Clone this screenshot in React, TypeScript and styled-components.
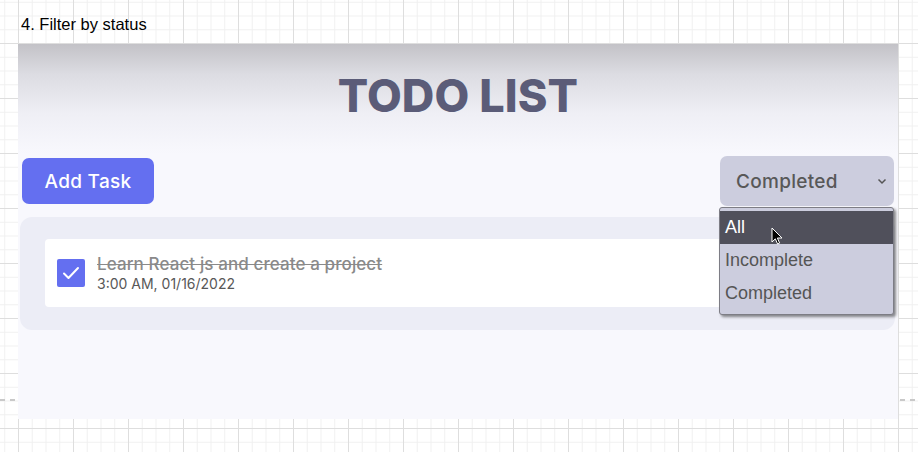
import React from "react";
import styled, { createGlobalStyle } from "styled-components";

const Global = createGlobalStyle`
  html, body { margin: 0; padding: 0; }
  body {
    width: 918px;
    height: 452px;
    overflow: hidden;
    font-family: "Liberation Sans", Arial, sans-serif;
    background-color: #ffffff;
    background-image:
      repeating-linear-gradient(90deg, #c9c9c9 0 5px, transparent 5px 10px),
      linear-gradient(90deg, #dedede 1px, transparent 1px),
      linear-gradient(0deg, #dedede 1px, transparent 1px),
      linear-gradient(90deg, #f0f0f0 1px, transparent 1px),
      linear-gradient(0deg, #f0f0f0 1px, transparent 1px);
    background-size: 100% 2px, 55px 55px, 55px 55px, 13.75px 13.75px, 13.75px 13.75px;
    background-position: 0 399px, 18px 44px, 18px 44px, 18px 44px, 18px 44px;
    background-repeat: no-repeat, repeat, repeat, repeat, repeat;
  }
`;

const Caption = styled.div`
  height: 44px;
  box-sizing: border-box;
  padding: 15px 0 0 21px;
  font-size: 16.5px;
  line-height: 18px;
  color: #000;
`;

const Panel = styled.div`
  margin-left: 18px;
  width: 880px;
  height: 375px;
  box-sizing: border-box;
  padding: 0 4px;
  background: linear-gradient(180deg, #c3c2c7 0px, #dcdce2 30px, #efeff5 70px, #f8f8fd 110px, #f8f8fd 100%);
  font-family: Inter, "Noto Sans", sans-serif;
  display: flex;
  flex-direction: column;
`;

const Title = styled.h1`
  margin: 24px 0 0;
  text-align: center;
  font-size: 45px;
  line-height: 56px;
  font-weight: 800;
  color: #5b5c78;
  letter-spacing: 0.1px;
`;

const Toolbar = styled.div`
  margin-top: 32px;
  display: flex;
  align-items: center;
  justify-content: space-between;
`;

const AddButton = styled.button`
  width: 132px;
  height: 46px;
  border: none;
  border-radius: 7px;
  background: #646ff0;
  color: #fff;
  font-family: inherit;
  font-size: 19px;
  font-weight: 500;
  letter-spacing: 0.3px;
  padding: 0;
`;

const SelectWrap = styled.div`
  position: relative;
`;

const SelectBox = styled.div`
  width: 174px;
  height: 50px;
  box-sizing: border-box;
  border-radius: 7px;
  background: #cccdde;
  display: flex;
  align-items: center;
  justify-content: space-between;
  padding: 0 7px 0 16px;
  color: #585858;
  font-size: 19px;
  font-weight: 500;
  letter-spacing: 0.3px;
`;

const Menu = styled.div`
  position: absolute;
  top: 51px;
  left: -1px;
  width: 175px;
  height: 108px;
  box-sizing: border-box;
  padding-top: 3px;
  background: #cccdde;
  border: 1px solid #7d7d85;
  border-radius: 3px;
  box-shadow: 2px 2px 3px rgba(0, 0, 0, 0.45);
  font-family: "Liberation Sans", Arial, sans-serif;
  z-index: 2;
`;

const Option = styled.div<{ $active?: boolean }>`
  height: 33px;
  line-height: 33px;
  padding-left: 5px;
  font-size: 18px;
  color: ${(p) => (p.$active ? "#ffffff" : "#555555")};
  background: ${(p) => (p.$active ? "#50505b" : "transparent")};
`;

const Cursor = styled.svg`
  position: absolute;
  left: 51px;
  top: 19px;
`;

const ListBox = styled.div`
  margin-top: 11px;
  margin-left: -2px;
  width: 875px;
  box-sizing: border-box;
  padding: 22px 25px 23px;
  border-radius: 12px;
  background: #ecedf6;
`;

const Card = styled.div`
  height: 68px;
  box-sizing: border-box;
  background: #fff;
  border-radius: 4px;
  display: flex;
  align-items: center;
  gap: 12px;
  padding-left: 12px;
`;

const Check = styled.div`
  width: 28px;
  height: 28px;
  border-radius: 2px;
  background: #646ff0;
  display: flex;
  align-items: center;
  justify-content: center;
`;

const Texts = styled.div`
  display: flex;
  flex-direction: column;
`;

const TaskTitle = styled.div`
  font-size: 17px;
  line-height: 22px;
  font-weight: 500;
  color: #8a8a8a;
  text-decoration: line-through;
  letter-spacing: 0.1px;
`;

const TaskTime = styled.div`
  font-size: 14px;
  line-height: 18px;
  color: #585858;
`;

export default function App() {
  return (
    <>
      <Global />
      <Caption>4. Filter by status</Caption>
      <Panel>
        <Title>TODO LIST</Title>
        <Toolbar>
          <AddButton>Add Task</AddButton>
          <SelectWrap>
            <SelectBox>
              <span>Completed</span>
              <svg width="10" height="8" viewBox="0 0 10 8">
                <path d="M1.5 2.5 L5 6 L8.5 2.5" fill="none" stroke="#555" strokeWidth="1.5" />
              </svg>
            </SelectBox>
            <Menu>
              <Option $active>All</Option>
              <Option>Incomplete</Option>
              <Option>Completed</Option>
              <Cursor width="12" height="19" viewBox="0 0 12 19">
                <path
                  d="M1 1 L1 15 L4.3 11.8 L6.6 17 L8.6 16.1 L6.4 11 L11 11 Z"
                  fill="#000"
                  stroke="#fff"
                  strokeWidth="1"
                  strokeLinejoin="round"
                />
              </Cursor>
            </Menu>
          </SelectWrap>
        </Toolbar>
        <ListBox>
          <Card>
            <Check>
              <svg width="18" height="14" viewBox="0 0 18 14">
                <path d="M2 7.5 L6.5 12 L16 2" fill="none" stroke="#fff" strokeWidth="2" strokeLinecap="round" strokeLinejoin="round" />
              </svg>
            </Check>
            <Texts>
              <TaskTitle>Learn React js and create a project</TaskTitle>
              <TaskTime>3:00 AM, 01/16/2022</TaskTime>
            </Texts>
          </Card>
        </ListBox>
      </Panel>
    </>
  );
}
